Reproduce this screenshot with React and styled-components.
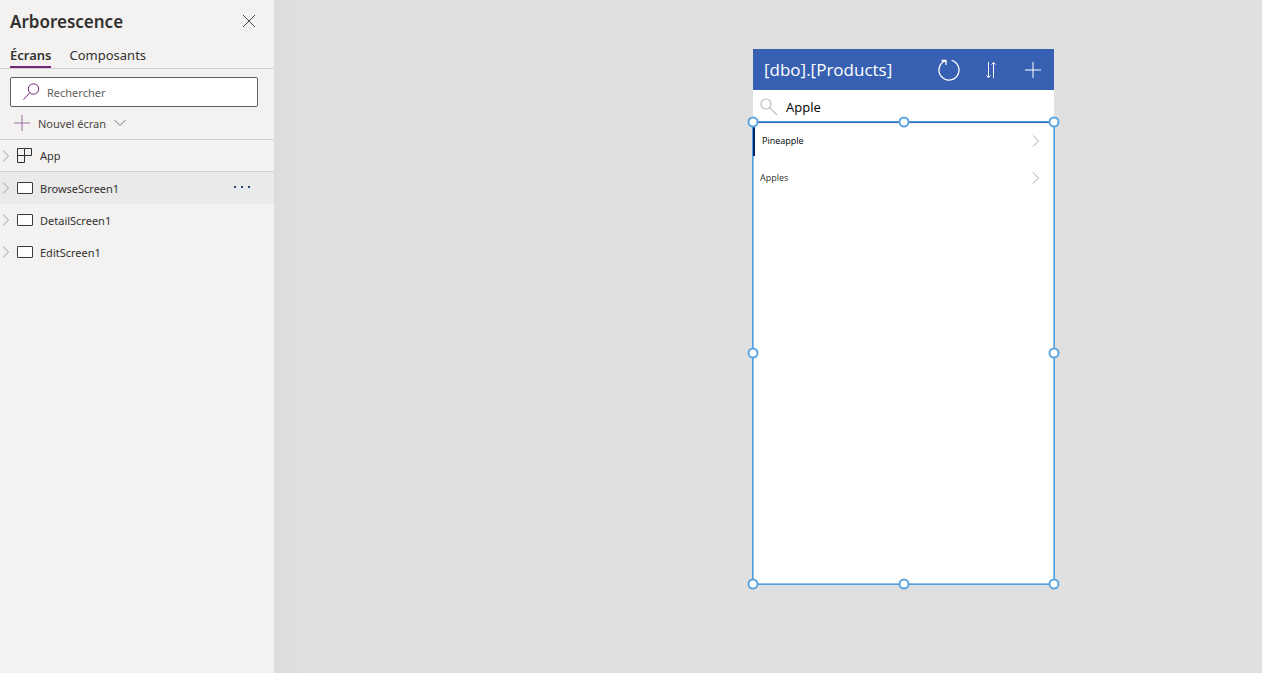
import { useState } from "react";
import styled, { createGlobalStyle } from "styled-components";

const screens = ["BrowseScreen1", "DetailScreen1", "EditScreen1"];
const products = ["Pineapple", "Apples"];
const handles = [
  [0, 0], [50, 0], [100, 0],
  [0, 50], [100, 50],
  [0, 100], [50, 100], [100, 100],
];

const Chevron = () => (
  <svg width="8" height="12" viewBox="0 0 8 12" fill="none" stroke="currentColor" aria-hidden="true">
    <path d="M1 .5 6.5 6 1 11.5" />
  </svg>
);

const ScreenIcon = () => (
  <svg width="16" height="12" viewBox="0 0 16 12" aria-hidden="true">
    <rect x="0.5" y="0.5" width="15" height="11" rx="0.5" fill="#fff" stroke="#3b3a39" />
  </svg>
);

const AppIcon = () => (
  <svg width="16" height="16" viewBox="0 0 16 16" fill="none" stroke="#323130" aria-hidden="true">
    <path d="M.5.5h14v7H.5zM7.5.5v14h-7V.5" />
  </svg>
);

const TreeView = () => {
  const [selected, setSelected] = useState("BrowseScreen1");
  const [query, setQuery] = useState("");

  return (
    <StPanel>
      <StPanelHead>
        <h1>Arborescence</h1>
        <StIconButton aria-label="Fermer">
          <svg width="14" height="14" viewBox="0 0 14 14" stroke="#484644" fill="none">
            <path d="M1 1l12 12M13 1 1 13" />
          </svg>
        </StIconButton>
      </StPanelHead>

      <StTabs role="tablist">
        <StTab role="tab" aria-selected="true" $active>Écrans</StTab>
        <StTab role="tab" aria-selected="false">Composants</StTab>
      </StTabs>

      <StTools>
        <StSearch>
          <svg width="18" height="18" viewBox="0 0 18 18" stroke="#742774" fill="none" aria-hidden="true">
            <circle cx="10.5" cy="6" r="5.2" />
            <path d="M6.800 9.700.5 16.500" />
          </svg>
          <input
            aria-label="Rechercher"
            placeholder="Rechercher"
            value={query}
            onChange={(e) => setQuery(e.target.value)}
          />
        </StSearch>
        <StNewScreen>
          <svg width="16" height="16" viewBox="0 0 16 16" stroke="#9b6a9f" fill="none" aria-hidden="true">
            <path d="M8 0v16M0 8h16" />
          </svg>
          Nouvel écran
          <svg width="12" height="8" viewBox="0 0 12 8" stroke="#797775" fill="none" aria-hidden="true">
            <path d="M.5 1 6 6.5 11.5 1" />
          </svg>
        </StNewScreen>
      </StTools>

      <StAppRow>
        <StRowButton>
          <Chevron />
          <AppIcon />
          <span>App</span>
        </StRowButton>
      </StAppRow>
      {screens.map((name) => (
        <StRow key={name} $selected={name === selected}>
          <StRowButton onClick={() => setSelected(name)}>
            <Chevron />
            <ScreenIcon />
            <span>{name}</span>
          </StRowButton>
          {name === selected && (
            <StIconButton aria-label="Plus">
              <svg width="16" height="4" viewBox="0 0 16 4" fill="#1f4a78">
                <path d="M0 0h2v2H0zM7 0h2v2H7zM14 0h2v2h-2z" />
              </svg>
            </StIconButton>
          )}
        </StRow>
      ))}
    </StPanel>
  );
};

const PhonePreview = () => {
  const [filter, setFilter] = useState("Apple");

  return (
    <StPhone>
      <StAppBar>
        <h2>[dbo].[Products]</h2>
        <button aria-label="Actualiser">
          <svg width="24" height="24" viewBox="0 0 24 24" fill="none" stroke="#fff" strokeWidth="1.3">
            <path d="M14.600 2.400A10 10 0 1 1 8.700 2.600M4.500 2.500H9V7" />
          </svg>
        </button>
        <button aria-label="Trier">
          <svg width="12" height="18" viewBox="0 0 12 18" fill="none" stroke="#fff">
            <path d="M3.500 1v15M1.500 14.500l2 2 2-2" />
            <path d="M8.500 17V2M6.500 3.500l2-2 2 2" />
          </svg>
        </button>
        <button aria-label="Ajouter">
          <svg width="16" height="16" viewBox="0 0 16 16" fill="none" stroke="#fff">
            <path d="M8 0v16M0 8h16" />
          </svg>
        </button>
      </StAppBar>

      <StFilter>
        <svg width="18" height="18" viewBox="0 0 18 18" fill="none" stroke="#bdbdbd" strokeWidth="1.2" aria-hidden="true">
          <circle cx="6" cy="6" r="5" />
          <path d="M9.600 9.600 17 17" />
        </svg>
        <input aria-label="Filtre" value={filter} onChange={(e) => setFilter(e.target.value)} />
      </StFilter>

      <StGallery>
        {products.map((name, i) => (
          <StProduct key={name} $first={i === 0}>
            {name}
            <Chevron />
          </StProduct>
        ))}
        {handles.map(([x, y]) => (
          <StHandle key={`${x}-${y}`} $x={x} $y={y} />
        ))}
      </StGallery>
    </StPhone>
  );
};

const App = () => (
  <StLayout>
    <GlobalStyle />
    <TreeView />
    <StCanvas>
      <PhonePreview />
    </StCanvas>
  </StLayout>
);
export default App;

const GlobalStyle = createGlobalStyle`
  * {
    box-sizing: border-box;
  }
  body {
    margin: 0;
    font-family: "Segoe UI", "Noto Sans", sans-serif;
    font-size: 11px;
    color: #323130;
  }
  h1, h2, ul {
    margin: 0;
    padding: 0;
  }
  button, input {
    font: inherit;
    color: inherit;
    border: none;
    background: none;
    padding: 0;
  }
  button {
    cursor: pointer;
  }
  svg {
    display: block;
    flex: none;
  }
`;

const StLayout = styled.div`
  display: flex;
  min-height: 100vh;
`;

const StPanel = styled.aside`
  flex: none;
  width: 274px;
  background-color: #f3f2f1;
`;

const StPanelHead = styled.header`
  display: flex;
  align-items: center;
  justify-content: space-between;
  height: 42px;
  padding: 0 18px 0 10px;
  & h1 {
    font-size: 17px;
    font-weight: 600;
  }
`;

const StIconButton = styled.button`
  display: flex;
`;

const StTabs = styled.div`
  display: flex;
  gap: 18px;
  height: 27px;
  padding-left: 10px;
  border-bottom: 1px solid #d2d0ce;
`;

const StTab = styled.button`
  height: 26px;
  padding-top: 2px;
  font-size: 13px;
  font-weight: ${(props) => (props.$active ? 600 : 400)};
  border-bottom: 2px solid ${(props) => (props.$active ? "#742774" : "transparent")};
`;

const StTools = styled.div`
  padding: 8px 16px 0 10px;
`;

const StSearch = styled.label`
  display: flex;
  align-items: center;
  gap: 6px;
  height: 30px;
  padding: 0 12px;
  background-color: #fff;
  border: 1px solid #605e5c;
  border-radius: 2px;
  & input {
    flex: 1;
    min-width: 0;
    outline: none;
  }
  & input::placeholder {
    color: #605e5c;
    opacity: 1;
  }
`;

const StNewScreen = styled.button`
  display: flex;
  align-items: center;
  gap: 8px;
  height: 32px;
  padding-left: 4px;
  color: #484644;
`;

const StRow = styled.div`
  display: flex;
  align-items: center;
  height: 32px;
  padding-right: 24px;
  background-color: ${(props) => (props.$selected ? "#eaeaea" : "transparent")};
`;

const StAppRow = styled(StRow)`
  height: 33px;
  border: solid #d2d0ce;
  border-width: 1px 0;
`;

const StRowButton = styled.button`
  display: flex;
  flex: 1;
  align-items: center;
  gap: 7px;
  height: 100%;
  padding-left: 2px;
  & svg:first-child {
    color: #a19f9d;
  }
`;

const StCanvas = styled.main`
  display: flex;
  flex: 1;
  justify-content: center;
  padding: 49px 0 89px 271px;
  background: linear-gradient(to right, #dcdcdc, #e0e0e0 34px);
`;

const StPhone = styled.section`
  display: flex;
  flex-direction: column;
  width: 301px;
  background-color: #fff;
  font-family: "Open Sans", sans-serif;
`;

const StAppBar = styled.header`
  display: flex;
  align-items: center;
  gap: 18px;
  height: 41px;
  padding: 0 9px 0 11px;
  background-color: #3860b2;
  color: #fff;
  & h2 {
    flex: 1;
    font-size: 17px;
    font-weight: 400;
    white-space: nowrap;
  }
  & button {
    display: flex;
    justify-content: center;
    width: 24px;
  }
`;

const StFilter = styled.label`
  display: flex;
  align-items: center;
  gap: 8px;
  height: 32px;
  padding: 2px 0 0 7px;
  & input {
    flex: 1;
    min-width: 0;
    font-size: 13px;
    color: #000;
    outline: none;
  }
`;

const StGallery = styled.ul`
  position: relative;
  flex: 1;
  box-shadow: inset 0 1px 0 #3860b2, 0 0 0 1px #4f9fe0, inset 0 0 0 1px #8fc1ea;
  list-style: none;
`;

const StProduct = styled.li`
  display: flex;
  align-items: center;
  justify-content: space-between;
  height: 37px;
  padding: 0 14px 0 7px;
  font-size: 9px;
  ${(props) => props.$first && `
    background: linear-gradient(#001f6b, #001f6b) 0 2px / 2px 32px no-repeat;
    padding-left: 9px;
    color: #000;
    font-weight: 500;
  `}
  & svg {
    color: #a6a6a6;
  }
`;

const StHandle = styled.li`
  position: absolute;
  left: ${(props) => props.$x}%;
  top: ${(props) => props.$y}%;
  width: 11px;
  height: 11px;
  border: 2px solid #5ba5e0;
  border-radius: 50%;
  background-color: #fff;
  transform: translate(-50%, -50%);
`;
